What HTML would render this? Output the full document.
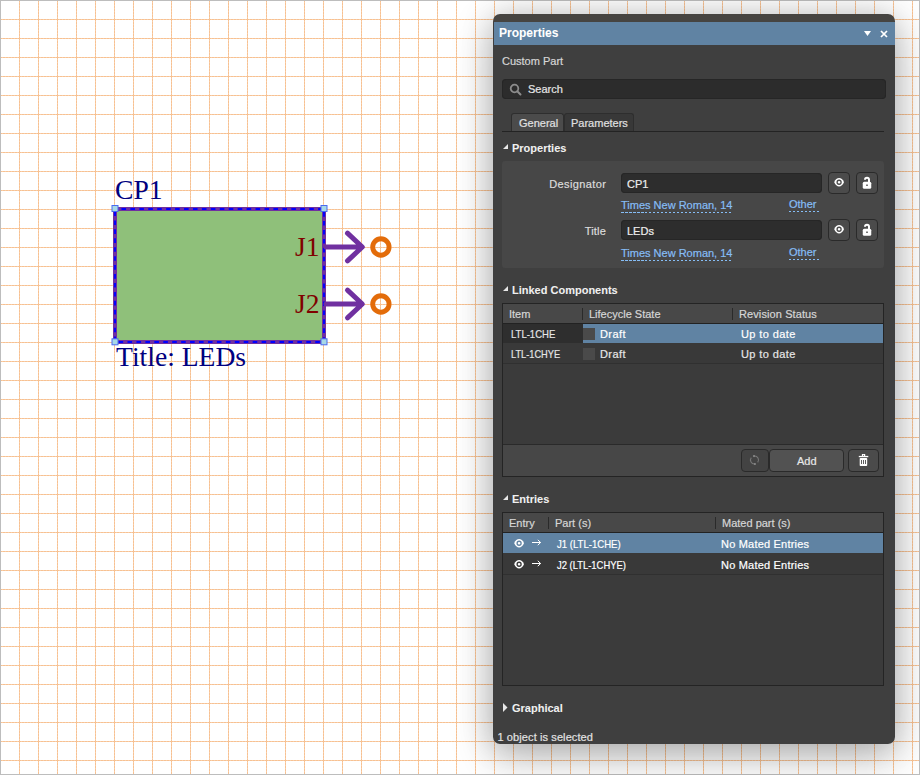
<!DOCTYPE html>
<html><head><meta charset="utf-8"><style>
html,body{margin:0;padding:0;width:920px;height:775px;overflow:hidden;background:#fff;}
.a{position:absolute;}
.t{position:absolute;white-space:nowrap;font-family:"Liberation Sans",sans-serif;-webkit-text-stroke:0.2px currentColor;}
</style></head><body>

<svg class="a" style="left:0;top:0" width="920" height="775">
  <defs>
    <pattern id="d" x="0" y="0" width="3" height="3" patternUnits="userSpaceOnUse">
      <rect x="0" y="0" width="3" height="3" fill="#f7c191"/>
      <rect x="2" y="2" width="1" height="1" fill="#fad3b2"/>
      <rect x="2" y="0" width="1" height="1" fill="#f9cda8"/>
      <rect x="0" y="2" width="1" height="1" fill="#f9cda8"/>
    </pattern>
    <pattern id="g" x="0" y="0" width="19" height="19" patternUnits="userSpaceOnUse">
      <rect x="0" y="0" width="1" height="19" fill="url(#d)"/>
      <rect x="0" y="0" width="19" height="1" fill="url(#d)"/>
    </pattern>
  </defs>
  <rect x="0" y="0" width="920" height="775" fill="#ffffff"/>
  <rect x="0" y="0" width="920" height="775" fill="url(#g)"/>
  <rect x="115" y="209" width="209" height="133" fill="#8fc07a"/>
  <rect x="115" y="209" width="209" height="133" fill="none" stroke="#7030a0" stroke-width="4"/>
  <rect x="115" y="209" width="209" height="133" fill="none" stroke="#0000ff" stroke-width="1.9" stroke-dasharray="4.6 4.34" stroke-dashoffset="2.5"/>
  <g stroke="#7030a0" stroke-width="5" fill="none" stroke-linecap="round" stroke-linejoin="round">
    <path d="M326 247 H362 M347.5 233.2 L362.3 247 L347.5 260.8"/>
    <path d="M326 304 H362 M347.5 290.2 L362.3 304 L347.5 317.8"/>
  </g>
  <g stroke="#e36c0a" stroke-width="4.9" fill="none">
    <circle cx="380.9" cy="247" r="8.2"/>
    <circle cx="380.9" cy="304" r="8.2"/>
  </g>
  <g fill="#a8d8e6" stroke="#4a6af0" stroke-width="1">
    <rect x="112" y="205.5" width="6" height="6"/>
    <rect x="321" y="205.5" width="6" height="6"/>
    <rect x="112" y="338.8" width="6" height="6"/>
    <rect x="321" y="338.8" width="6" height="6"/>
  </g>
  <g font-family="Liberation Serif" font-size="27.6">
    <text x="115" y="199" fill="#000080">CP1</text>
    <text x="116" y="366" fill="#000080">Title: LEDs</text>
    <text x="295" y="256" fill="#800000">J1</text>
    <text x="295" y="313" fill="#800000">J2</text>
  </g>
  <rect x="0" y="0" width="920" height="1" fill="#bdbdbd"/>
  <rect x="0" y="0" width="1" height="775" fill="#bdbdbd"/>
  <rect x="919" y="0" width="1" height="775" fill="#bdbdbd"/>
  <rect x="0" y="774" width="920" height="1" fill="#bdbdbd"/>
</svg>
<div class="a" style="left:493px;top:14px;width:402px;height:730px;background:linear-gradient(#464441 0 8px,#3f3f3f 8px);border-radius:7px;box-shadow:0 14px 40px rgba(0,0,0,0.25),0 0 32px rgba(0,0,0,0.17);"></div>
<div class="a" style="left:494px;top:22px;width:401px;height:23px;background:#6083a3;"></div>
<div class="t" style="left:499px;top:25.64px;font-size:12px;line-height:14px;color:#ffffff;font-weight:700;-webkit-text-stroke:0.05px currentColor;">Properties</div>
<svg class="a" style="left:860px;top:26px" width="32" height="16">
<path d="M4 5 H11 L7.5 10 Z" fill="#fff"/>
<path d="M21 5 L27 11 M27 5 L21 11" stroke="#fff" stroke-width="1.75"/>
</svg><div class="t" style="left:502px;top:54.19px;font-size:11px;line-height:14px;color:#d6d6d6;font-weight:400;">Custom Part</div>
<div class="a" style="left:502px;top:79px;width:384px;height:20px;background:#2c2c2c;border-radius:4px;box-shadow:inset 0 0 0 1px #262626;"></div>
<svg class="a" style="left:508px;top:83px" width="16" height="14">
<circle cx="6.5" cy="5.5" r="3.8" stroke="#8c8c8c" stroke-width="1.8" fill="none"/>
<path d="M9.3 8.3 L12.5 11.5" stroke="#8c8c8c" stroke-width="2" stroke-linecap="round"/>
</svg><div class="t" style="left:528px;top:82.19px;font-size:11px;line-height:14px;color:#e6e6e6;font-weight:400;">Search</div>
<div class="a" style="left:502px;top:131px;width:382px;height:1px;background:#232323;"></div>
<div class="a" style="left:511px;top:113px;width:53px;height:18px;background:#4b4b4b;border:1px solid #2e2e2e;border-bottom:none;border-radius:3px 3px 0 0;box-sizing:border-box;"></div>
<div class="a" style="left:564px;top:113px;width:70px;height:18px;background:#383838;border:1px solid #2e2e2e;border-bottom:none;border-radius:3px 3px 0 0;box-sizing:border-box;"></div>
<div class="t" style="left:519px;top:116.19px;font-size:11px;line-height:14px;color:#e0e0e0;font-weight:400;">General</div>
<div class="t" style="left:571px;top:116.19px;font-size:11px;line-height:14px;color:#e0e0e0;font-weight:400;">Parameters</div>
<svg class="a" style="left:503px;top:144px" width="6" height="6"><path d="M5 0 V5 H0 Z" fill="#e8e8e8"/></svg>
<div class="t" style="left:512px;top:141.19px;font-size:11px;line-height:14px;color:#f0f0f0;font-weight:700;-webkit-text-stroke:0.05px currentColor;">Properties</div>
<div class="a" style="left:502px;top:161px;width:382px;height:107px;background:#474747;border-radius:3px;"></div>
<div class="t" style="right:313.6px;top:177.19px;font-size:11px;line-height:14px;color:#dcdcdc;font-weight:400;text-align:right;letter-spacing:0.4px;">Designator</div>
<div class="a" style="left:621px;top:173px;width:201px;height:20px;background:#2d2d2d;border-radius:4px;box-shadow:inset 0 0 0 1px #262626;"></div>
<div class="t" style="left:627px;top:177.19px;font-size:11px;line-height:14px;color:#eeeeee;font-weight:400;">CP1</div>
<div class="t" style="left:621px;top:198.19px;font-size:11px;line-height:14px;color:#86bdf5;font-weight:400;">Times New Roman, 14</div>
<div class="a" style="left:621px;top:212px;width:110px;height:1px;background:repeating-linear-gradient(90deg,#86bdf5 0 2.5px,transparent 2.5px 4px);"></div>
<div class="t" style="left:789px;top:197.39px;font-size:11px;line-height:14px;color:#86bdf5;font-weight:400;">Other</div>
<div class="a" style="left:789px;top:211px;width:30px;height:1px;background:repeating-linear-gradient(90deg,#86bdf5 0 2.5px,transparent 2.5px 4px);"></div>
<div class="t" style="right:314px;top:224.19px;font-size:11px;line-height:14px;color:#dcdcdc;font-weight:400;text-align:right;letter-spacing:0.2px;">Title</div>
<div class="a" style="left:621px;top:220px;width:201px;height:20px;background:#2d2d2d;border-radius:4px;box-shadow:inset 0 0 0 1px #262626;"></div>
<div class="t" style="left:627px;top:224.19px;font-size:11px;line-height:14px;color:#eeeeee;font-weight:400;">LEDs</div>
<div class="t" style="left:621px;top:245.99px;font-size:11px;line-height:14px;color:#86bdf5;font-weight:400;">Times New Roman, 14</div>
<div class="a" style="left:621px;top:260px;width:110px;height:1px;background:repeating-linear-gradient(90deg,#86bdf5 0 2.5px,transparent 2.5px 4px);"></div>
<div class="t" style="left:789px;top:245.19px;font-size:11px;line-height:14px;color:#86bdf5;font-weight:400;">Other</div>
<div class="a" style="left:789px;top:259px;width:30px;height:1px;background:repeating-linear-gradient(90deg,#86bdf5 0 2.5px,transparent 2.5px 4px);"></div>
<div class="a" style="left:828px;top:172px;width:22px;height:22px;background:#4b4b4b;border:1px solid #2a2a2a;border-radius:4px;box-sizing:border-box;"></div>
<svg class="a" style="left:834px;top:178.25px" width="11" height="9"><path d="M0.2 4.25 C2.3 -1.3 7.9 -1.3 10 4.25 C7.9 9.8 2.3 9.8 0.2 4.25 Z" fill="#fff"/><circle cx="5.1" cy="4.25" r="2.0" fill="#fff" stroke="#4b4b4b" stroke-width="1.3"/></svg>
<div class="a" style="left:856px;top:172px;width:22px;height:22px;background:#4b4b4b;border:1px solid #2a2a2a;border-radius:4px;box-sizing:border-box;"></div>
<svg class="a" style="left:862px;top:176px" width="10" height="14"><path d="M3 3.7 A2 2 0 0 1 7 3.7 V6.5" stroke="#fff" stroke-width="2" fill="none"/><rect x="0.75" y="5.75" width="8.5" height="7" rx="1.5" fill="#fff"/><rect x="4.25" y="8.5" width="1.5" height="1.5" fill="#4b4b4b"/></svg>
<div class="a" style="left:828px;top:219px;width:22px;height:22px;background:#4b4b4b;border:1px solid #2a2a2a;border-radius:4px;box-sizing:border-box;"></div>
<svg class="a" style="left:834px;top:225.25px" width="11" height="9"><path d="M0.2 4.25 C2.3 -1.3 7.9 -1.3 10 4.25 C7.9 9.8 2.3 9.8 0.2 4.25 Z" fill="#fff"/><circle cx="5.1" cy="4.25" r="2.0" fill="#fff" stroke="#4b4b4b" stroke-width="1.3"/></svg>
<div class="a" style="left:856px;top:219px;width:22px;height:22px;background:#4b4b4b;border:1px solid #2a2a2a;border-radius:4px;box-sizing:border-box;"></div>
<svg class="a" style="left:862px;top:223px" width="10" height="14"><path d="M3 3.7 A2 2 0 0 1 7 3.7 V6.5" stroke="#fff" stroke-width="2" fill="none"/><rect x="0.75" y="5.75" width="8.5" height="7" rx="1.5" fill="#fff"/><rect x="4.25" y="8.5" width="1.5" height="1.5" fill="#4b4b4b"/></svg>
<svg class="a" style="left:503px;top:286px" width="6" height="6"><path d="M5 0 V5 H0 Z" fill="#e8e8e8"/></svg>
<div class="t" style="left:512px;top:283.19px;font-size:11px;line-height:14px;color:#f0f0f0;font-weight:700;-webkit-text-stroke:0.05px currentColor;">Linked Components</div>
<div class="a" style="left:502px;top:303px;width:382px;height:174px;background:#3b3b3b;border:1px solid #242424;box-sizing:border-box;"></div>
<div class="a" style="left:503px;top:304px;width:380px;height:20px;background:#484848;border-bottom:1px solid #222;box-sizing:border-box;"></div>
<div class="a" style="left:582px;top:308px;width:1px;height:12px;background:#2a2a2a;"></div>
<div class="a" style="left:732px;top:308px;width:1px;height:12px;background:#2a2a2a;"></div>
<div class="t" style="left:509px;top:307.19px;font-size:11px;line-height:14px;color:#d6d6d6;font-weight:400;">Item</div>
<div class="t" style="left:589px;top:307.19px;font-size:11px;line-height:14px;color:#d6d6d6;font-weight:400;">Lifecycle State</div>
<div class="t" style="left:739px;top:307.19px;font-size:11px;line-height:14px;color:#d6d6d6;font-weight:400;letter-spacing:0.1px;">Revision Status</div>
<div class="a" style="left:503px;top:324px;width:80px;height:19px;background:#2e2e2e;"></div>
<div class="a" style="left:583px;top:324px;width:300px;height:19px;background:#6083a3;"></div>
<div class="a" style="left:503px;top:343px;width:380px;height:21px;background:#393939;border-bottom:1px solid #303030;box-sizing:border-box;"></div>
<div class="a" style="left:583px;top:328px;width:12px;height:12px;background:#4a4a4a;"></div>
<div class="a" style="left:583px;top:348px;width:12px;height:12px;background:#4a4a4a;"></div>
<div class="t" style="left:511px;top:326.99px;font-size:11px;line-height:14px;color:#e6e6e6;font-weight:400;transform:scaleX(0.865);transform-origin:0 0;">LTL-1CHE</div>
<div class="t" style="left:600px;top:326.99px;font-size:11px;line-height:14px;color:#ffffff;font-weight:400;letter-spacing:0.4px;">Draft</div>
<div class="t" style="left:741px;top:326.99px;font-size:11px;line-height:14px;color:#ffffff;font-weight:400;letter-spacing:0.4px;">Up to date</div>
<div class="t" style="left:511px;top:347.09px;font-size:11px;line-height:14px;color:#e6e6e6;font-weight:400;transform:scaleX(0.84);transform-origin:0 0;">LTL-1CHYE</div>
<div class="t" style="left:600px;top:347.09px;font-size:11px;line-height:14px;color:#e6e6e6;font-weight:400;letter-spacing:0.4px;">Draft</div>
<div class="t" style="left:741px;top:347.09px;font-size:11px;line-height:14px;color:#e6e6e6;font-weight:400;letter-spacing:0.4px;">Up to date</div>
<div class="a" style="left:503px;top:444px;width:380px;height:1px;background:#2a2a2a;"></div>
<div class="a" style="left:503px;top:445px;width:380px;height:31px;background:#474747;"></div>
<div class="a" style="left:741px;top:449px;width:28px;height:23px;background:#434343;border:1px solid #2a2a2a;border-radius:4px;box-sizing:border-box;"></div>
<svg class="a" style="left:748px;top:453px" width="14" height="14"><g transform="translate(6.5 7)"><path d="M-0.5 -4 A4 4 0 0 1 3.2 2.4 M0.5 4 A4 4 0 0 1 -3.2 -2.4" stroke="#777" stroke-width="1.1" fill="none"/><circle cx="-0.5" cy="-3.9" r="1.1" fill="#888"/><circle cx="0.4" cy="4" r="1.1" fill="#888"/></g></svg>
<div class="a" style="left:769px;top:449px;width:75px;height:23px;background:#525252;border:1px solid #2a2a2a;border-radius:4px;box-sizing:border-box;"></div>
<div class="t" style="left:797px;top:454.19px;font-size:11px;line-height:14px;color:#e8e8e8;font-weight:400;">Add</div>
<div class="a" style="left:848px;top:449px;width:31px;height:23px;background:#4b4b4b;border:1px solid #2a2a2a;border-radius:4px;box-sizing:border-box;"></div>
<svg class="a" style="left:858px;top:453px" width="12" height="14"><rect x="0.8" y="2.9" width="9.5" height="1.3" fill="#fff"/><rect x="3.9" y="1" width="3.3" height="2.2" fill="#fff"/><rect x="5.1" y="1.9" width="0.9" height="0.9" fill="#4b4b4b"/><rect x="1.7" y="4.9" width="7.5" height="8.1" rx="0.8" fill="#fff"/><rect x="3.1" y="7" width="0.9" height="4" fill="#4b4b4b"/><rect x="5.05" y="7" width="0.9" height="4" fill="#4b4b4b"/><rect x="7" y="7" width="0.9" height="4" fill="#4b4b4b"/></svg>
<svg class="a" style="left:503px;top:495px" width="6" height="6"><path d="M5 0 V5 H0 Z" fill="#e8e8e8"/></svg>
<div class="t" style="left:512px;top:492.19px;font-size:11px;line-height:14px;color:#f0f0f0;font-weight:700;-webkit-text-stroke:0.05px currentColor;">Entries</div>
<div class="a" style="left:502px;top:512px;width:382px;height:174px;background:#3b3b3b;border:1px solid #242424;box-sizing:border-box;"></div>
<div class="a" style="left:503px;top:513px;width:380px;height:20px;background:#484848;border-bottom:1px solid #222;box-sizing:border-box;"></div>
<div class="a" style="left:548px;top:517px;width:1px;height:12px;background:#2a2a2a;"></div>
<div class="a" style="left:715px;top:517px;width:1px;height:12px;background:#2a2a2a;"></div>
<div class="t" style="left:509px;top:516.19px;font-size:11px;line-height:14px;color:#d6d6d6;font-weight:400;">Entry</div>
<div class="t" style="left:555px;top:516.19px;font-size:11px;line-height:14px;color:#d6d6d6;font-weight:400;">Part (s)</div>
<div class="t" style="left:722px;top:516.19px;font-size:11px;line-height:14px;color:#d6d6d6;font-weight:400;">Mated part (s)</div>
<div class="a" style="left:503px;top:533px;width:380px;height:20px;background:#6083a3;"></div>
<div class="a" style="left:503px;top:553px;width:380px;height:22px;background:#393939;border-bottom:1px solid #303030;box-sizing:border-box;"></div>
<svg class="a" style="left:514px;top:538.5px" width="11" height="9"><path d="M0.2 4.25 C2.3 -1.3 7.9 -1.3 10 4.25 C7.9 9.8 2.3 9.8 0.2 4.25 Z" fill="#fff"/><circle cx="5.1" cy="4.25" r="2.0" fill="#fff" stroke="#6083a3" stroke-width="1.3"/></svg>
<svg class="a" style="left:532px;top:538.6px" width="10" height="8"><path d="M0 3.5 H8.6 M5.8 0.8 L8.6 3.5 L5.8 6.2" stroke="#fff" stroke-width="1" fill="none"/></svg>
<div class="t" style="left:557px;top:536.69px;font-size:11px;line-height:14px;color:#ffffff;font-weight:400;transform:scaleX(0.87);transform-origin:0 0;">J1 (LTL-1CHE)</div>
<div class="t" style="left:721px;top:536.69px;font-size:11px;line-height:14px;color:#ffffff;font-weight:400;letter-spacing:0.2px;">No Mated Entries</div>
<svg class="a" style="left:514px;top:559.5px" width="11" height="9"><path d="M0.2 4.25 C2.3 -1.3 7.9 -1.3 10 4.25 C7.9 9.8 2.3 9.8 0.2 4.25 Z" fill="#fff"/><circle cx="5.1" cy="4.25" r="2.0" fill="#fff" stroke="#383838" stroke-width="1.3"/></svg>
<svg class="a" style="left:532px;top:559.6px" width="10" height="8"><path d="M0 3.5 H8.6 M5.8 0.8 L8.6 3.5 L5.8 6.2" stroke="#fff" stroke-width="1" fill="none"/></svg>
<div class="t" style="left:557px;top:557.69px;font-size:11px;line-height:14px;color:#ffffff;font-weight:400;transform:scaleX(0.856);transform-origin:0 0;">J2 (LTL-1CHYE)</div>
<div class="t" style="left:721px;top:557.69px;font-size:11px;line-height:14px;color:#ffffff;font-weight:400;letter-spacing:0.2px;">No Mated Entries</div>
<svg class="a" style="left:503px;top:703.3px" width="6" height="9"><path d="M0 0 L4.5 4.5 L0 9 Z" fill="#e8e8e8"/></svg>
<div class="t" style="left:512px;top:701.49px;font-size:11px;line-height:14px;color:#f0f0f0;font-weight:700;-webkit-text-stroke:0.05px currentColor;">Graphical</div>
<div class="t" style="left:497.5px;top:730.19px;font-size:11px;line-height:14px;color:#e2e2e2;font-weight:400;letter-spacing:0.1px;">1 object is selected</div>
</body></html>
